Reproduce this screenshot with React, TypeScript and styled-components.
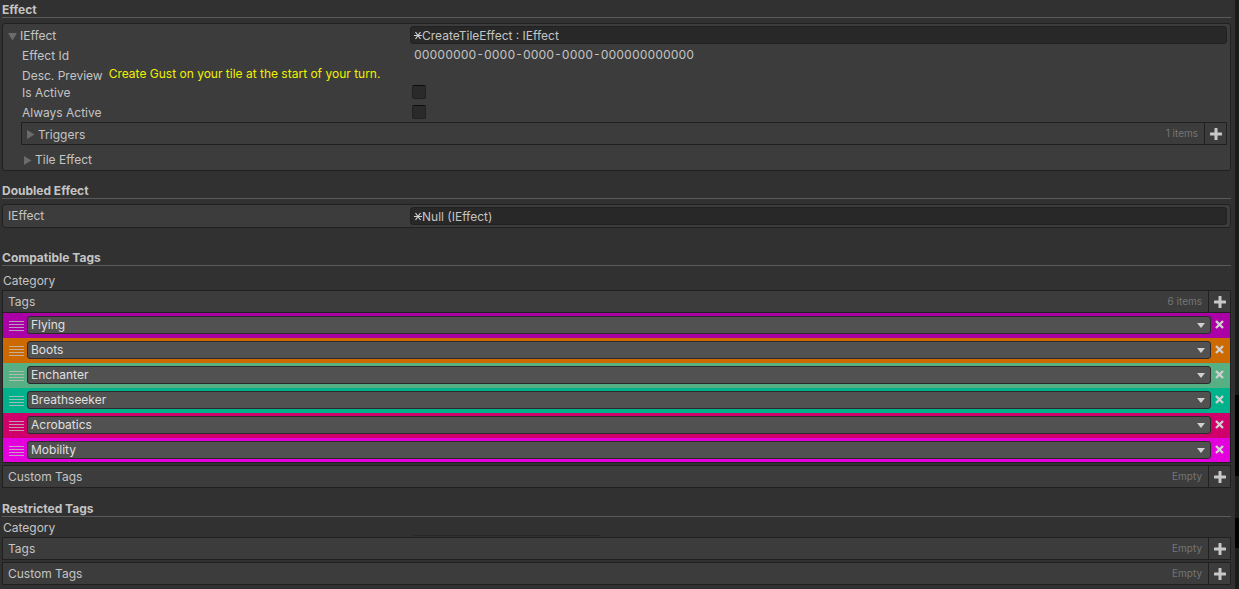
import React, { useId, useState } from "react";
import styled, { createGlobalStyle } from "styled-components";

const c = {
  page: "#313131",
  panel: "#3c3c3c",
  line: "#202020",
  rule: "#5a5a5a",
  field: "#282828",
  select: "#515151",
  text: "#c4c4c4",
  dim: "#757575",
};

const GlobalStyle = createGlobalStyle`
  * { box-sizing: border-box; }
  body {
    margin: 0;
    background: ${c.page};
    color: ${c.text};
    font: 12px/18px Inter, "Liberation Sans", sans-serif;
  }
  button, input, select { font: inherit; color: inherit; margin: 0; }
  button { border: 0; padding: 0; background: none; text-align: left; }
`;

const Window = styled.div`
  display: flex;
  min-height: 100vh;
`;

const Inspector = styled.main`
  flex: 1;
  min-width: 0;
  padding: 0 4px 4px 2px;
`;

const WindowEdge = styled.div`
  width: 4px;
  background: linear-gradient(
    #1b1b1b 395px, #000 395px, #000 476px,
    #1b1b1b 476px, #1b1b1b 518px, #000 518px, #000 548px, #1b1b1b 548px
  );
`;

const Section = styled.section<{ $gap: number }>`
  margin-bottom: ${(p) => p.$gap}px;
`;

const Heading = styled.h2`
  margin: 0;
  height: 18px;
  border-bottom: 1px solid ${c.rule};
  font-size: 12px;
  font-weight: 700;
  line-height: 19px;
`;

const Panel = styled.div<{ $bottom: number }>`
  display: flex;
  flex-direction: column;
  margin-top: 5px;
  padding: 2px 3px ${(p) => p.$bottom}px;
  border: 1px solid ${c.line};
  border-radius: 3px;
  background: ${c.panel};
`;

const Row = styled.div<{ $height: number; $indent: number; $top?: number }>`
  display: flex;
  align-items: center;
  height: ${(p) => p.$height}px;
  padding-top: ${(p) => p.$top ?? 0}px;
  padding-left: ${(p) => p.$indent}px;
`;

const LabelCell = styled.div<{ $width: number; $top?: number }>`
  display: flex;
  flex: 0 0 ${(p) => p.$width}px;
  padding-top: ${(p) => p.$top ?? 0}px;
`;

const Foldout = styled.button`
  display: flex;
  align-items: center;
  gap: 3px;
`;

const Value = styled.output`
  padding-left: 4px;
  font-variant-numeric: tabular-nums;
`;

const ObjectField = styled.button`
  display: flex;
  flex: 1;
  align-items: center;
  height: 18px;
  padding: 2px 3px 0;
  border: 1px solid #212121;
  border-radius: 3px;
  background: ${c.field};
`;

const Description = styled.output`
  height: 20px;
  padding-left: 6px;
  color: #f0f000;
  line-height: 16px;
`;

const Checkbox = styled.input`
  appearance: none;
  width: 14px;
  height: 14px;
  margin-left: 2px;
  border: 1px solid #212121;
  border-top-color: #0d0d0d;
  border-radius: 2px;
  background: #2a2a2a;
  &:checked { background: ${c.text}; }
`;

const ListBar = styled.div<{ $indent?: number; $top?: number }>`
  display: flex;
  align-items: stretch;
  height: 23px;
  margin: ${(p) => p.$top ?? 0}px 0 0 ${(p) => p.$indent ?? 0}px;
  border: 1px solid ${c.line};
  background: ${c.panel};
`;

const ListTitle = styled.div<{ $foldout?: boolean }>`
  display: flex;
  flex: 1;
  align-items: center;
  padding: ${(p) => (p.$foldout ? "2px 0 0 4px" : "0 0 0 5px")};
`;

const Count = styled.span`
  padding-right: 6px;
  color: ${c.dim};
  font-size: 10px;
  line-height: 21px;
`;

const AddButton = styled.button`
  display: grid;
  place-items: center;
  width: 22px;
  border-left: 1px solid ${c.line};
`;

const Category = styled.div<{ $height: number; $top: number }>`
  display: flex;
  align-items: center;
  height: ${(p) => p.$height}px;
  padding: ${(p) => p.$top}px 0 0 1px;
`;

const CategoryLine = styled.hr`
  width: 188px;
  height: 1px;
  margin: 0 0 1px 411px;
  border: 0;
  background: #272727;
`;

const TagList = styled.ul`
  margin: 0;
  padding: 0;
  list-style: none;
  border: 1px solid ${c.line};
  border-top: 0;
`;

const TagItem = styled.li<{ $color: string }>`
  display: flex;
  align-items: flex-start;
  height: 25px;
  padding: 3px 0 0 6px;
  background: ${(p) => p.$color};
  &:last-child { height: 24px; }
`;

const Handle = styled.button`
  display: flex;
  width: 18px;
  padding: 5px 0 2px;
`;

const SelectBox = styled.div`
  position: relative;
  flex: 1;
  height: 18px;
`;

const Select = styled.select`
  appearance: none;
  display: block;
  width: 100%;
  height: 18px;
  padding: 0 20px 0 3px;
  border: 1px solid #2a2a2a;
  border-radius: 3px;
  background: ${c.select};
  color: #e0e0e0;
  line-height: 16px;
`;

const Caret = styled.svg`
  position: absolute;
  top: 7px;
  right: 6px;
  pointer-events: none;
`;

const RemoveButton = styled.button`
  display: flex;
  width: 19px;
  padding: 4px;
`;

const Triangle = ({ open = false }: { open?: boolean }) => (
  <svg width="9" height="9" viewBox="0 0 9 9" fill="#6b6b6b" aria-hidden="true">
    <path d={open ? "M0 1h9L4.5 8.5z" : "M1 0v9l7.500-4.500z"} />
  </svg>
);

const Asterisk = () => (
  <svg width="8" height="10" viewBox="0 0 8 10" stroke="#d2d2d2" strokeWidth="1.200" fill="none" aria-hidden="true">
    <path d="M0 4.500h8M1.500 1l5 7M6.500 1l-5 7" />
  </svg>
);

const Plus = () => (
  <svg width="12" height="12" viewBox="0 0 12 12" fill="#c8c8c8" aria-hidden="true">
    <path d="M4.500.5q0-.5.5-.5h2q.5 0 .5.5v4h4q.5 0 .5.5v2q0 .5-.5.5h-4v4q0 .5-.5.5H5q-.5 0-.5-.5v-4h-4Q0 7.500 0 7V5q0-.5.5-.5h4z" />
  </svg>
);

const Cross = () => (
  <svg width="9" height="9" viewBox="0 0 9 9" stroke="#d0d0d0" strokeWidth="2.400" aria-hidden="true">
    <path d="M1 1l7 7M8 1l-7 7" />
  </svg>
);

const Grip = () => (
  <svg width="15" height="11" viewBox="0 0 15 11" fill="#c0c0c0" fillOpacity=".8" aria-hidden="true">
    <path d="M0 0h15v1H0zM0 3h15v1H0zM0 6h15v1H0zM0 9h15v1H0z" />
  </svg>
);

function Toggle({ label }: { label: string }) {
  const id = useId();
  return (
    <>
      <LabelCell $width={388} $top={2}>
        <label htmlFor={id}>{label}</label>
      </LabelCell>
      <Checkbox id={id} type="checkbox" />
    </>
  );
}

function List({ title, count, foldout, indent, top }: {
  title: string; count: string; foldout?: boolean; indent?: number; top?: number;
}) {
  return (
    <ListBar $indent={indent} $top={top}>
      <ListTitle $foldout={foldout}>
        {foldout ? <Foldout type="button"><Triangle />{title}</Foldout> : title}
      </ListTitle>
      <Count>{count}</Count>
      <AddButton type="button" aria-label={`Add to ${title}`}><Plus /></AddButton>
    </ListBar>
  );
}

const tags = [
  { name: "Flying", color: "#aa00a5" },
  { name: "Boots", color: "#cc6a00" },
  { name: "Enchanter", color: "#56b084" },
  { name: "Breathseeker", color: "#00b28c" },
  { name: "Acrobatics", color: "#cf0069" },
  { name: "Mobility", color: "#e400dc" },
];

function TagRow({ name, color }: { name: string; color: string }) {
  const [value, setValue] = useState(name);
  return (
    <TagItem $color={color}>
      <Handle type="button" aria-label={`Reorder ${name}`}><Grip /></Handle>
      <SelectBox>
        <Select aria-label="Tag" value={value} onChange={(e) => setValue(e.target.value)}>
          {tags.map((t) => <option key={t.name}>{t.name}</option>)}
        </Select>
        <Caret width="8" height="5" viewBox="0 0 8 5" fill="#d0d0d0" aria-hidden="true">
          <path d="M0 0h8L4 5z" />
        </Caret>
      </SelectBox>
      <RemoveButton type="button" aria-label={`Remove ${name}`}><Cross /></RemoveButton>
    </TagItem>
  );
}

export default function App() {
  return (
    <Window>
      <GlobalStyle />
      <Inspector>
        <Section $gap={10}>
          <Heading>Effect</Heading>
          <Panel $bottom={0}>
            <Row $height={18} $indent={2}>
              <LabelCell $width={402} $top={2}>
                <Foldout type="button"><Triangle open />IEffect</Foldout>
              </LabelCell>
              <ObjectField type="button"><Asterisk />CreateTileEffect : IEffect</ObjectField>
            </Row>
            <Row $height={22} $indent={16}>
              <LabelCell $width={388} $top={2}>Effect Id</LabelCell>
              <Value>00000000-0000-0000-0000-000000000000</Value>
            </Row>
            <Row $height={18} $indent={16} $top={2}>
              <span>Desc. Preview</span>
              <Description>Create Gust on your tile at the start of your turn.</Description>
            </Row>
            <Row $height={16} $indent={16}><Toggle label="Is Active" /></Row>
            <Row $height={24} $indent={16}><Toggle label="Always Active" /></Row>
            <List title="Triggers" count="1 items" foldout indent={15} top={-2} />
            <Row $height={25} $indent={17} $top={5}>
              <Foldout type="button"><Triangle />Tile Effect</Foldout>
            </Row>
          </Panel>
        </Section>

        <Section $gap={20}>
          <Heading>Doubled Effect</Heading>
          <Panel $bottom={2}>
            <Row $height={18} $indent={2}>
              <LabelCell $width={402}>IEffect</LabelCell>
              <ObjectField type="button"><Asterisk />Null (IEffect)</ObjectField>
            </Row>
          </Panel>
        </Section>

        <Section $gap={11}>
          <Heading>Compatible Tags</Heading>
          <Category $height={24} $top={6}>Category</Category>
          <List title="Tags" count="6 items" />
          <TagList>
            {tags.map((t) => <TagRow key={t.name} {...t} />)}
          </TagList>
          <List title="Custom Tags" count="Empty" top={2} />
        </Section>

        <Section $gap={0}>
          <Heading>Restricted Tags</Heading>
          <Category $height={18} $top={4}>Category</Category>
          <CategoryLine />
          <List title="Tags" count="Empty" />
          <List title="Custom Tags" count="Empty" top={2} />
        </Section>
      </Inspector>
      <WindowEdge />
    </Window>
  );
}
